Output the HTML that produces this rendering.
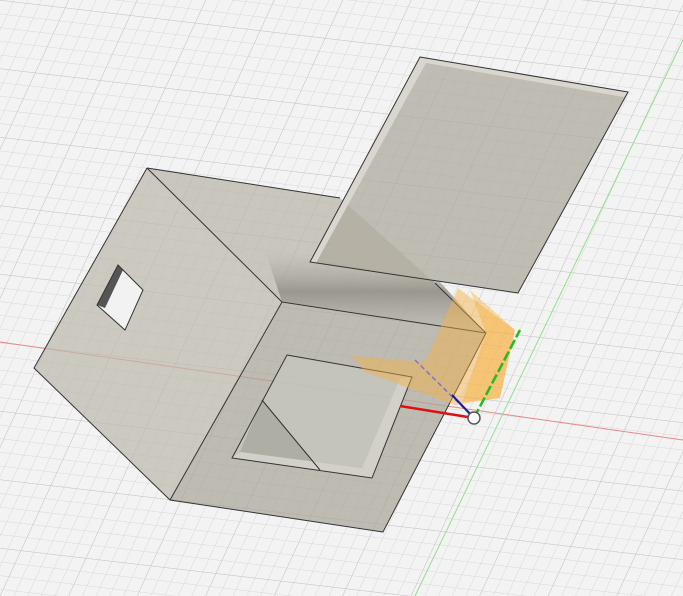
<!DOCTYPE html>
<html><head><style>html,body{margin:0;padding:0;background:#f3f3f3;overflow:hidden}svg{display:block}</style></head>
<body>
<svg width="683" height="596" viewBox="0 0 683 596" xmlns="http://www.w3.org/2000/svg">
<defs>
<pattern id="g" width="13" height="13" patternUnits="userSpaceOnUse" patternTransform="matrix(1,0.117,-0.46,1,0,0)">
<path d="M0 0H13M0 0V13" stroke="#d6d6d6" stroke-width="1" fill="none"/>
</pattern>
<pattern id="G" width="65" height="65" patternUnits="userSpaceOnUse" patternTransform="matrix(1,0.117,-0.46,1,0,0)">
<path d="M0 0H65M0 0V65" stroke="#c4c4c4" stroke-width="1" fill="none"/>
</pattern>
<linearGradient id="sh" x1="0" y1="0" x2="0" y2="1">
<stop offset="0" stop-color="#b5b2a9" stop-opacity="0"/><stop offset="0.5" stop-color="#8e8b84"/><stop offset="1" stop-color="#a9a69e" stop-opacity="0.3"/>
</linearGradient>
</defs>
<rect width="683" height="596" fill="#f3f3f3"/>
<rect width="683" height="596" fill="url(#g)"/>
<rect width="683" height="596" fill="url(#G)"/>
<line x1="0" y1="342" x2="683" y2="440" stroke="#e58a8a" stroke-width="1"/>
<line x1="683" y1="40" x2="415" y2="596" stroke="#8fe08f" stroke-width="1"/>
<!-- top face -->
<polygon points="147,168 340,198 435,283 486,333 282,302" fill="#b8b4a8" opacity="0.72"/>
<polygon points="265,250 440,282 486,333 282,302" fill="url(#sh)" opacity="0.8"/>
<!-- left face -->
<polygon points="147,168 282,302 170,500 34,368" fill="#bdb9ad" opacity="0.72"/>
<!-- front face -->
<polygon points="282,302 486,333 383,532 170,500" fill="#a9a598" opacity="0.72"/>
<!-- front window -->
<polygon points="287,355 412,377 372,478 232,458" fill="#f0f0ee" opacity="0.6"/>
<polygon points="287,355 412,377 372,478 232,458" fill="#b3b0a6" opacity="0.55"/>
<polygon points="262,400 320,470 372,478 412,377 400,378 362,468 240,452" fill="#9a978f" opacity="0.5"/>
<polygon points="232,458 240,452 362,468 372,478" fill="#d2d0c8"/>
<polygon points="400,378 412,377 372,478 362,468" fill="#d2d0c8"/>
<line x1="262" y1="400" x2="320" y2="470" stroke="#333"/>
<polygon points="287,355 412,377 372,478 232,458" fill="none" stroke="#333" stroke-width="1"/>
<!-- left window -->
<polygon points="118,265 143,290 125,330 97,305" fill="#f2f2f2"/>
<polygon points="118,265 97,305 105,308 123,270" fill="#555"/>
<polygon points="118,265 143,290 125,330 97,305" fill="none" stroke="#333"/>
<!-- box edges -->
<polyline points="147,168 34,368 170,500 383,532 486,333 282,302 170,500" fill="none" stroke="#333" stroke-width="1"/>
<polyline points="147,168 282,302" fill="none" stroke="#333"/>
<polyline points="147,168 340,198" fill="none" stroke="#333"/>
<polyline points="435,283 486,333" fill="none" stroke="#333"/>
<!-- plate -->
<polygon points="420,57 628,92 518,293 310,262" fill="#aeaa9e" opacity="0.75"/>
<polygon points="420,57 628,92 624,97 426,63 316,263 310,262" fill="#d8d6ce"/>
<polygon points="420,57 628,92 518,293 310,262" fill="none" stroke="#333"/>
<!-- orange -->
<polygon points="458,288 515,330 500,398 455,405 365,372 352,356 425,362" fill="#f7b241" opacity="0.45"/>
<polygon points="470,290 515,330 500,398 462,402 486,333" fill="#f5a623" opacity="0.35"/>
<!-- triad -->
<line x1="415" y1="360" x2="474" y2="418" stroke="#7777cc" stroke-width="1.5" stroke-dasharray="5,3"/>
<line x1="452" y1="395" x2="474" y2="418" stroke="#1a1a99" stroke-width="2"/>
<line x1="400" y1="406" x2="474" y2="418" stroke="#d11" stroke-width="2.5"/>
<line x1="474" y1="418" x2="520" y2="330" stroke="#22bb22" stroke-width="2.5" stroke-dasharray="10,3"/>
<circle cx="474" cy="418" r="6" fill="#fff" stroke="#555" stroke-width="1.5"/>
</svg>
</body></html>
